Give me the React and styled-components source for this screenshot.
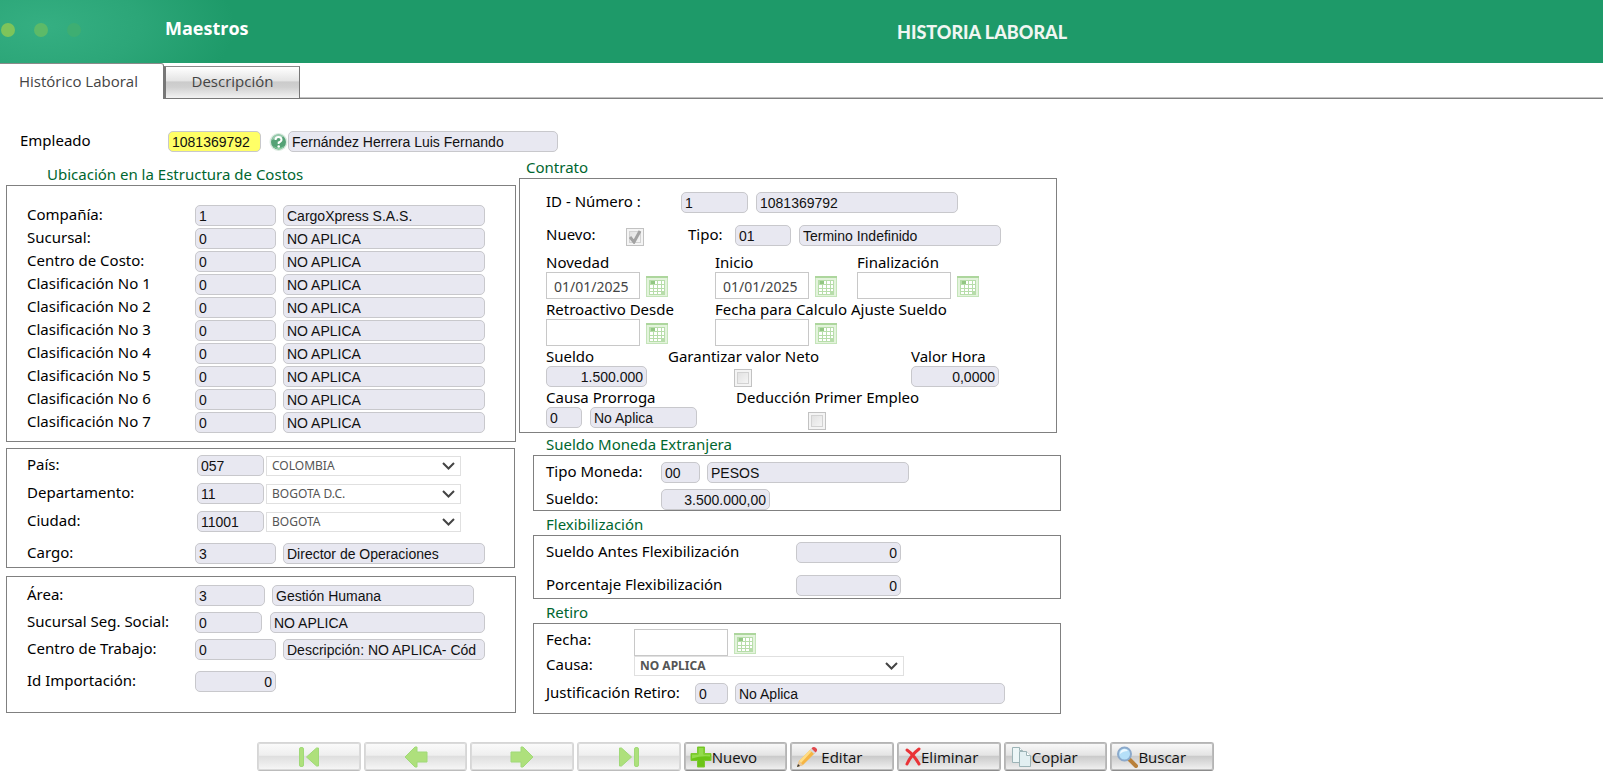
import React, { useId } from 'react'
import styled, { createGlobalStyle } from 'styled-components'

const GlobalStyle = createGlobalStyle`
    * {
        box-sizing: border-box;
    }
    body {
        margin: 0;
        background: #fff;
        color: #000;
        font: 15px/20px "Noto Sans", sans-serif;
    }
`

const Header = styled.header`
    height: 63px;
    display: grid;
    grid-template-columns: 165px 1fr 706px;
    align-items: center;
    background: radial-gradient(ellipse 190px 90px at 45px 26px, #35af82 0%, #2ca678 50%, #1e9a69 100%);
    color: #fff;
`
const Dots = styled.svg`
    width: 90px;
    height: 20px;
    margin-bottom: 4px;
`
const Brand = styled.strong`
    padding-bottom: 8px;
    font: bold 18px/24px "Open Sans", sans-serif;
`
const Title = styled.h1`
    margin: 0;
    color: #f0f6f2;
    font: 900 18px/24px Lato, sans-serif;
`

const Tabs = styled.nav`
    display: flex;
    align-items: flex-end;
    height: 36px;
    border-bottom: 1px solid #808080;
    box-shadow: inset 0 -1px #c4c4c4;
`
const Tab = styled.button`
    width: ${p => p.$active ? '164px' : '136px'};
    height: ${p => p.$active ? '36px' : '33px'};
    margin-bottom: -1px;
    padding: ${p => p.$active ? '0 6px 1px 0' : '0 0 3px'};
    border: ${p => p.$active ? '0' : '1px'} solid #777;
    border-top: 1px solid #8a8a8a;
    border-right: 1px solid #777;
    border-left-width: ${p => p.$active ? '0' : '2px'};
    border-radius: ${p => p.$active ? '0 3px 0 0' : '0'};
    background: ${p => p.$active ? '#fff' : 'linear-gradient(#fff 0, #e4e4e4 45%, #cbcbcb 48%, #d0d0d0 65%, #f2f2f2 100%)'};
    color: #444;
    font: 15px/20px "Open Sans", sans-serif;
`

const Main = styled.main`
    padding: 32px 6px 0;
`
const Columns = styled.div`
    display: flex;
    align-items: flex-start;
    gap: 3px;
    margin-top: 5px;
`
const LeftColumn = styled.div`
    width: 510px;
    padding-top: 7px;
`
const RightColumn = styled.div`
    width: 542px;
`
const Inset = styled.div`
    padding-left: 14px;
`
const GroupTitle = styled.h2`
    margin: 0;
    padding: ${p => p.$top || 0}px 0 1px ${p => p.$left}px;
    color: #00662f;
    font-size: 15px;
    line-height: 20px;
    font-weight: normal;
`
const Panel = styled.section`
    margin-top: ${p => p.$top || 0}px;
    margin-right: ${p => p.$right || 0}px;
    padding: ${p => p.$pad};
    border: 1px solid #808080;
`
const Row = styled.div`
    display: flex;
    align-items: ${p => p.$align || 'center'};
    height: ${p => p.$height || 21}px;
    margin-bottom: ${p => p.$below || 0}px;
    padding-left: ${p => p.$left || 0}px;
`
const Label = styled.label`
    flex: none;
    width: ${p => p.$width ? p.$width + 'px' : 'auto'};
    padding-bottom: 4px;
    white-space: nowrap;
`
const TextBox = styled.input`
    flex: none;
    width: ${p => p.$width}px;
    height: 21px;
    margin: 0 ${p => p.$gap || 0}px 0 0;
    padding: 1px 3px 0;
    border: 1px solid #c8c8cc;
    border-radius: 5px;
    background: ${p => p.$key ? '#ffff66' : '#e8e8f1'};
    color: #111;
    font: 14px/18px "Liberation Sans", Arial, sans-serif;
    text-align: ${p => p.$number ? 'right' : 'left'};
    outline: none;
`
const DateBox = styled.input`
    width: 94px;
    height: 27px;
    margin: 0;
    padding: 2px 7px 0;
    border: 1px solid #c8c8c8;
    background: #fff;
    color: #444;
    font: 14px/20px "Noto Sans", sans-serif;
    outline: none;
`
const DateLine = styled.div`
    display: flex;
    align-items: center;
    gap: 6px;
`
const IconButton = styled.button`
    display: flex;
    flex: none;
    margin: 0;
    padding: 0;
    border: 0;
    background: none;
`
const SelectWrap = styled.span`
    position: relative;
    flex: none;
    width: ${p => p.$width}px;
    svg {
        position: absolute;
        top: 5px;
        right: 6px;
        pointer-events: none;
    }
`
const SelectBox = styled.select`
    display: block;
    width: 100%;
    height: 20px;
    margin: 0;
    padding: 0 5px;
    border: 1px solid #e0e0e0;
    border-radius: 0;
    appearance: none;
    background: #fff;
    color: #555;
    font: ${p => p.$bold ? 'bold' : 'normal'} 12px/18px "Noto Sans", sans-serif;
`
const CheckWrap = styled.span`
    position: relative;
    display: block;
    flex: none;
    align-self: flex-end;
    width: 18px;
    height: 18px;
    svg {
        position: absolute;
        top: 2px;
        left: 2px;
        pointer-events: none;
    }
`
const CheckBox = styled.input`
    display: block;
    width: 18px;
    height: 18px;
    margin: 0;
    appearance: none;
    border: 1px solid #c2c2c2;
    background: linear-gradient(135deg, #dcdcdc, #fafafa);
    box-shadow: inset 0 0 0 2px #f4f4f4, inset 0 0 0 3px #d2d2d2;
`
const Stacks = styled.div`
    display: grid;
    grid-template-columns: ${p => p.$columns};
`
const Stack = styled.div`
    label {
        display: block;
        white-space: nowrap;
    }
`
const StackLine = styled.div`
    display: flex;
    height: ${p => p.$height || 21}px;
    padding-left: ${p => p.$indent || 0}px;
`
const Spacer = styled.span`
    width: ${p => p.$width}px;
`

const Toolbar = styled.footer`
    display: flex;
    gap: 3px;
    width: 957px;
    margin: 28px 0 0 251px;
`
const ToolButton = styled.button`
    flex: 1 1 0;
    display: flex;
    align-items: center;
    justify-content: ${p => p.$nav ? 'center' : 'flex-start'};
    gap: ${p => p.$gap || 0}px;
    height: 29px;
    margin: 0;
    padding: 0 5px;
    border: 1px solid ${p => p.$nav ? '#d6d6d6' : '#b4b4b4'};
    border-bottom-color: ${p => p.$nav ? '#bcbcbc' : '#8c8c8c'};
    border-radius: 3px;
    box-shadow: inset 0 0 0 1px ${p => p.$nav ? '#dadada' : '#bcbcbc'};
    background: ${p => p.$nav
        ? 'linear-gradient(#fbfbfb, #efefef 45%, #dfdfdf 50%, #f7f7f7)'
        : 'linear-gradient(#fafafa, #e4e4e4 45%, #cbcbcb 50%, #f2f2f2)'};
    color: #111;
    font: 15px/20px "Open Sans", sans-serif;
    svg {
        flex: none;
    }
`

const Calendar = () => (
    <IconButton type="button" aria-label="Calendario">
        <svg width="22" height="22" viewBox="0 0 22 22">
            <rect x="0.500" y="1.500" width="21" height="20" fill="#e3f3dc" stroke="#c4e4b9" />
            <rect x="0" y="1" width="22" height="2" fill="#add69d" />
            <rect x="3" y="5" width="16" height="15" fill="#b7ddaa" />
            <path fill="#fff" d="M9 6h2v3H9zM12 6h3v3h-3zM16 6h2v3h-2zM4 10h3v3H4zM8 10h3v3H8zM12 10h3v3h-3zM16 10h2v3h-2zM4 14h3v2H4zM8 14h3v2H8zM12 14h3v2h-3zM16 14h2v2h-2zM4 17h3v2H4zM8 17h3v2H8zM12 17h3v2h-3z" />
            <rect x="5" y="6" width="4" height="3" fill="#93c784" />
        </svg>
    </IconButton>
)

const Chevron = () => (
    <svg width="13" height="10" viewBox="0 0 13 10">
        <path d="M1 2l5.500 5.500L12 2" fill="none" stroke="#444" strokeWidth="2" />
    </svg>
)

const Select = ({ value, width, bold, id }) => (
    <SelectWrap $width={width}>
        <SelectBox id={id} aria-label={value} defaultValue={value} $bold={bold}>
            <option>{value}</option>
        </SelectBox>
        <Chevron />
    </SelectWrap>
)

const Check = ({ id, checked }) => (
    <CheckWrap>
        <CheckBox id={id} type="checkbox" defaultChecked={checked} />
        {checked && (
            <svg width="14" height="14" viewBox="0 0 14 14">
                <path d="M2 7l4 5L12 1" fill="none" stroke="#a2a2a2" strokeWidth="3" />
            </svg>
        )}
    </CheckWrap>
)

// Label + code + description, the line most of the form is made of
const CodeRow = ({ label, code, text, labelWidth = 168, codeWidth = 81, textWidth = 202, gap = 7, below, number }) => {
    const id = useId()
    return (
        <Row $below={below}>
            <Label htmlFor={id} $width={labelWidth}>{label}</Label>
            <TextBox id={id} readOnly defaultValue={code} $width={codeWidth} $gap={gap} $number={number} />
            {text && <TextBox readOnly aria-label={text} defaultValue={text} $width={textWidth} />}
        </Row>
    )
}

const PlaceRow = ({ label, code, text, below }) => {
    const id = useId()
    return (
        <Row $below={below}>
            <Label htmlFor={id} $width={170}>{label}</Label>
            <TextBox id={id} readOnly defaultValue={code} $width={67} $gap={2} />
            <Select value={text} width={195} />
        </Row>
    )
}

const DateField = ({ label, value = '' }) => {
    const id = useId()
    return (
        <Stack>
            <label htmlFor={id}>{label}</label>
            <DateLine>
                <DateBox id={id} defaultValue={value} />
                <Calendar />
            </DateLine>
        </Stack>
    )
}

const costRows = [
    ['Compañía:', '1', 'CargoXpress S.A.S.'],
    ['Sucursal:', '0', 'NO APLICA'],
    ['Centro de Costo:', '0', 'NO APLICA'],
    ['Clasificación No 1', '0', 'NO APLICA'],
    ['Clasificación No 2', '0', 'NO APLICA'],
    ['Clasificación No 3', '0', 'NO APLICA'],
    ['Clasificación No 4', '0', 'NO APLICA'],
    ['Clasificación No 5', '0', 'NO APLICA'],
    ['Clasificación No 6', '0', 'NO APLICA'],
    ['Clasificación No 7', '0', 'NO APLICA'],
]

const Employee = () => (
    <Row $left={14}>
        <Label htmlFor="empleado" $width={148}>Empleado</Label>
        <TextBox id="empleado" defaultValue="1081369792" $width={93} $gap={8} $key />
        <IconButton type="button" aria-label="Ayuda">
            <svg width="19" height="20" viewBox="0 0 19 20">
                <circle cx="9.500" cy="10" r="9" fill="#dbeae0" />
                <circle cx="9.500" cy="10" r="7.500" fill="#55a276" />
                <path d="M3 8a6.500 6 0 0 1 12-3q-6 0-12 3z" fill="#98cbad" />
                <path d="M4 14q6 4 11 0-2 4-5.500 3.500T4 14z" fill="#8fd0a4" />
                <path d="M6.500 8q0-3 3-3t3 2.800Q12.500 9.500 9.700 10.500V12" fill="none" stroke="#fff" strokeWidth="2" />
                <circle cx="9.700" cy="14.500" r="1.300" fill="#fff" />
            </svg>
        </IconButton>
        <TextBox readOnly aria-label="Nombre" defaultValue="Fernández Herrera Luis Fernando" $width={270} />
    </Row>
)

const Contract = () => (
    <>
        <GroupTitle $left={7}>Contrato</GroupTitle>
        <Panel $right={4} $pad="13px 0 2px 26px">
            <CodeRow label="ID - Número :" code="1" text="1081369792" labelWidth={135} codeWidth={67} gap={8} below={12} />
            <Row $below={6}>
                <Label htmlFor="nuevo" $width={80}>Nuevo:</Label>
                <Check id="nuevo" checked />
                <Spacer $width={44} />
                <Label htmlFor="tipo" $width={47}>Tipo:</Label>
                <TextBox id="tipo" readOnly defaultValue="01" $width={56} $gap={8} />
                <TextBox readOnly aria-label="Tipo de contrato" defaultValue="Termino Indefinido" $width={202} />
            </Row>
            <Stacks $columns="169px 142px 1fr">
                <DateField label="Novedad" value="01/01/2025" />
                <DateField label="Inicio" value="01/01/2025" />
                <DateField label="Finalización" />
                <DateField label="Retroactivo Desde" />
                <DateField label="Fecha para Calculo Ajuste Sueldo" />
            </Stacks>
            <Stacks $columns="122px 243px 1fr">
                <Stack>
                    <label htmlFor="sueldo">Sueldo</label>
                    <TextBox id="sueldo" readOnly defaultValue="1.500.000" $width={101} $number />
                </Stack>
                <Stack>
                    <label htmlFor="neto">Garantizar valor Neto</label>
                    <StackLine $indent={66}><Check id="neto" /></StackLine>
                </Stack>
                <Stack>
                    <label htmlFor="hora">Valor Hora</label>
                    <TextBox id="hora" readOnly defaultValue="0,0000" $width={88} $number />
                </Stack>
            </Stacks>
            <Stacks $columns="190px 1fr">
                <Stack>
                    <label htmlFor="causa">Causa Prorroga</label>
                    <StackLine>
                        <TextBox id="causa" readOnly defaultValue="0" $width={36} $gap={8} />
                        <TextBox readOnly aria-label="Causa" defaultValue="No Aplica" $width={107} />
                    </StackLine>
                </Stack>
                <Stack>
                    <label htmlFor="empleo">Deducción Primer Empleo</label>
                    <StackLine $indent={72} $height={23}><Check id="empleo" /></StackLine>
                </Stack>
            </Stacks>
        </Panel>
    </>
)

const Leaving = () => (
    <>
        <GroupTitle $left={13} $top={3}>Retiro</GroupTitle>
        <Panel $pad="5px 0 9px 12px">
            <Row $height={27} $align="flex-start">
                <Label htmlFor="fecha" $width={88}>Fecha:</Label>
                <DateLine>
                    <DateBox id="fecha" />
                    <Calendar />
                </DateLine>
            </Row>
            <Row $height={20} $below={7}>
                <Label htmlFor="retiro" $width={88}>Causa:</Label>
                <Select id="retiro" value="NO APLICA" width={270} bold />
            </Row>
            <CodeRow label="Justificación Retiro:" code="0" text="No Aplica" labelWidth={149} codeWidth={33} textWidth={270} gap={7} />
        </Panel>
    </>
)

const Actions = () => (
    <Toolbar>
        <ToolButton type="button" aria-label="Primero" $nav>
            <svg width="22" height="22" viewBox="0 0 22 22" fill="#aee07c" stroke="#a0da78">
                <rect x="1.500" y="1.500" width="4" height="19" rx="1.500" />
                <path d="M20.500 2v18h-2L8.500 11l10-9z" />
            </svg>
        </ToolButton>
        <ToolButton type="button" aria-label="Anterior" $nav>
            <svg width="24" height="22" viewBox="0 0 24 22" fill="#aee07c" stroke="#a0da78">
                <path d="M1 11L11 1h2v5h10v10H13v5h-2z" />
            </svg>
        </ToolButton>
        <ToolButton type="button" aria-label="Siguiente" $nav>
            <svg width="24" height="22" viewBox="0 0 24 22" fill="#aee07c" stroke="#a0da78">
                <path d="M23 11L13 1h-2v5H1v10h10v5h2z" />
            </svg>
        </ToolButton>
        <ToolButton type="button" aria-label="Último" $nav>
            <svg width="22" height="22" viewBox="0 0 22 22" fill="#aee07c" stroke="#a0da78">
                <rect x="16.500" y="1.500" width="4" height="19" rx="1.500" />
                <path d="M1.500 2v18h2l10-9-10-9z" />
            </svg>
        </ToolButton>
        <ToolButton type="button">
            <svg width="22" height="22" viewBox="0 0 22 22">
                <path d="M7.500 1h7v6.500H21v7h-6.500V21h-7v-6.500H1v-7h6.500z" fill="#6cc417" stroke="#7cc832" strokeLinejoin="round" />
                <path d="M8.500 2h5v6.500H20v2q-9-1-18 2v-4h6.500z" fill="#93db4c" />
            </svg>
            Nuevo
        </ToolButton>
        <ToolButton type="button" $gap={3}>
            <svg width="22" height="22" viewBox="0 0 22 22">
                <path d="M1 21l2-6L15 3l4 4L7 19z" fill="#f6b544" />
                <path d="M3 15L15 3l1.500 1.500L5 17z" fill="#ffdd85" />
                <path d="M1 21l2-6 4 4z" fill="#e8c79c" />
                <path d="M1 21l1-3 2 2z" fill="#333" />
                <path d="M14 4l1.500-1.500 4 4L18 8z" fill="#d4d8dc" />
                <path d="M15.500 2.500Q17.500 0 20 2t-.5 4.500z" fill="#e0474c" />
            </svg>
            Editar
        </ToolButton>
        <ToolButton type="button">
            <svg width="18" height="22" viewBox="0 0 18 22">
                <path d="M4 4q7 5 12 14M16 3Q8 9 4 18" fill="none" stroke="#ea3337" strokeWidth="3" strokeLinecap="round" />
            </svg>
            Eliminar
        </ToolButton>
        <ToolButton type="button">
            <svg width="22" height="22" viewBox="0 0 22 22" stroke="#9db4b7">
                <path d="M2.500 1.500h7l3 3v12h-10z" fill="#edf6f7" />
                <path d="M9.500 1.500v3h3" fill="#fff" />
                <path d="M9.500 5.500h7l4 4v11h-11z" fill="#e2eff1" />
                <path d="M16.500 5.500v4h4" fill="#fff" />
            </svg>
            Copiar
        </ToolButton>
        <ToolButton type="button">
            <svg width="22" height="22" viewBox="0 0 22 22">
                <path d="M13 13l7 7" stroke="#b9803a" strokeWidth="4" strokeLinecap="round" />
                <circle cx="8.500" cy="8" r="6.500" fill="#b5dff8" stroke="#8ba9cb" strokeWidth="2" />
                <path d="M4 8q0-4 4-5 3 0 4 2-5 0-8 3z" fill="#eef9ff" />
            </svg>
            Buscar
        </ToolButton>
    </Toolbar>
)

const App = () => (
    <>
        <GlobalStyle />
        <Header>
            <Dots viewBox="0 0 90 20">
                <circle cx="8" cy="10" r="7" fill="#7dc45a" />
                <circle cx="41" cy="10" r="7" fill="#5dba68" />
                <circle cx="74" cy="10" r="7" fill="#3eae72" />
            </Dots>
            <Brand>Maestros</Brand>
            <Title>HISTORIA LABORAL</Title>
        </Header>
        <Tabs>
            <Tab type="button" $active>Histórico Laboral</Tab>
            <Tab type="button">Descripción</Tab>
        </Tabs>
        <Main>
            <Employee />
            <Columns>
                <LeftColumn>
                    <GroupTitle $left={41}>Ubicación en la Estructura de Costos</GroupTitle>
                    <Panel $pad="19px 0 6px 20px">
                        {costRows.map(([label, code, text]) => (
                            <CodeRow key={label} label={label} code={code} text={text} below={2} />
                        ))}
                    </Panel>
                    <Panel $top={6} $right={1} $pad="6px 0 3px 20px">
                        <PlaceRow label="País:" code="057" text="COLOMBIA" below={7} />
                        <PlaceRow label="Departamento:" code="11" text="BOGOTA D.C." below={7} />
                        <PlaceRow label="Ciudad:" code="11001" text="BOGOTA" below={11} />
                        <CodeRow label="Cargo:" code="3" text="Director de Operaciones" />
                    </Panel>
                    <Panel $top={8} $pad="8px 0 20px 20px">
                        <CodeRow label="Área:" code="3" text="Gestión Humana" codeWidth={70} below={6} />
                        <CodeRow label="Sucursal Seg. Social:" code="0" text="NO APLICA" codeWidth={67} textWidth={215} gap={8} below={6} />
                        <CodeRow label="Centro de Trabajo:" code="0" text="Descripción: NO APLICA- Cód" below={11} />
                        <CodeRow label="Id Importación:" code="0" number />
                    </Panel>
                </LeftColumn>
                <RightColumn>
                    <Contract />
                    <Inset>
                        <GroupTitle $left={13} $top={1}>Sueldo Moneda Extranjera</GroupTitle>
                        <Panel $pad="6px 0 0 12px">
                            <CodeRow label="Tipo Moneda:" code="00" text="PESOS" labelWidth={115} codeWidth={39} below={6} />
                            <CodeRow label="Sueldo:" code="3.500.000,00" labelWidth={115} codeWidth={109} number />
                        </Panel>
                        <GroupTitle $left={13} $top={3}>Flexibilización</GroupTitle>
                        <Panel $pad="6px 0 2px 12px">
                            <CodeRow label="Sueldo Antes Flexibilización" code="0" labelWidth={250} codeWidth={105} below={12} number />
                            <CodeRow label="Porcentaje Flexibilización" code="0" labelWidth={250} codeWidth={105} number />
                        </Panel>
                        <Leaving />
                    </Inset>
                </RightColumn>
            </Columns>
            <Actions />
        </Main>
    </>
)

export default App
